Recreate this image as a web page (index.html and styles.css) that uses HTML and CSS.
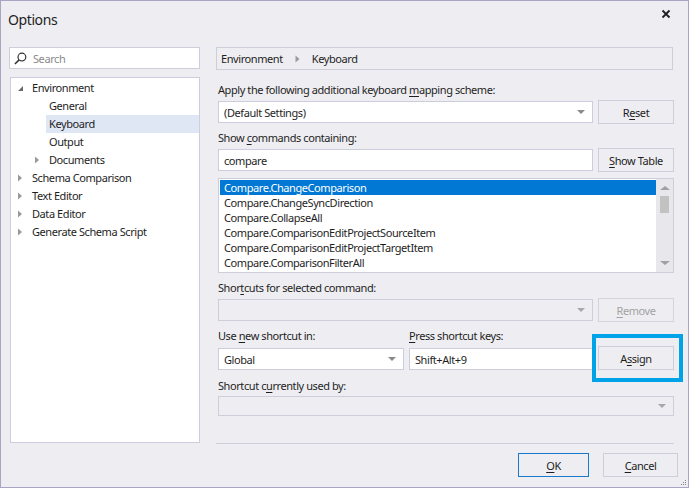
FILE: index.html
```html
<!DOCTYPE html>
<html>
<head>
<meta charset="utf-8">
<link rel="stylesheet" href="styles.css">
</head>
<body>
<div class="dialog">
  <div class="titlebar">
    <span class="title">Options</span>
    <svg class="close" width="10" height="10" viewBox="0 0 10 10"><path d="M1.5 1.5L8.5 8.5M8.5 1.5L1.5 8.5" stroke="#1e1e1e" stroke-width="1.8"/></svg>
  </div>
  <div class="content">
    <div class="leftcol">
      <div class="search">
        <svg width="13" height="13" viewBox="0 0 14 14"><circle cx="8.5" cy="5.5" r="4.2" fill="none" stroke="#333" stroke-width="1.3"/><path d="M5.5 8.5L1 13" stroke="#333" stroke-width="1.6"/></svg>
        <span class="placeholder">Search</span>
      </div>
      <div class="tree">
        <div class="node"><span class="exp"><svg width="7" height="7" viewBox="0 0 7 7"><path d="M6 1V6H1Z" fill="#6a6a6a"/></svg></span>Environment</div>
        <div class="node l1"><span class="exp"></span>General</div>
        <div class="node l1 sel"><span class="exp"></span>Keyboard</div>
        <div class="node l1"><span class="exp"></span>Output</div>
        <div class="node l1"><span class="exp"><svg width="6" height="8" viewBox="0 0 6 8"><path d="M1 0.5L5 4L1 7.5Z" fill="#9a9a9a"/></svg></span>Documents</div>
        <div class="node"><span class="exp"><svg width="6" height="8" viewBox="0 0 6 8"><path d="M1 0.5L5 4L1 7.5Z" fill="#9a9a9a"/></svg></span>Schema Comparison</div>
        <div class="node"><span class="exp"><svg width="6" height="8" viewBox="0 0 6 8"><path d="M1 0.5L5 4L1 7.5Z" fill="#9a9a9a"/></svg></span>Text Editor</div>
        <div class="node"><span class="exp"><svg width="6" height="8" viewBox="0 0 6 8"><path d="M1 0.5L5 4L1 7.5Z" fill="#9a9a9a"/></svg></span>Data Editor</div>
        <div class="node"><span class="exp"><svg width="6" height="8" viewBox="0 0 6 8"><path d="M1 0.5L5 4L1 7.5Z" fill="#9a9a9a"/></svg></span>Generate Schema Script</div>
      </div>
    </div>
    <div class="rightcol">
      <div class="crumb">
        <span>Environment</span>
        <svg width="5" height="8" viewBox="0 0 5 8"><path d="M0.5 0.5L4.5 4L0.5 7.5Z" fill="#9a9a9a"/></svg>
        <span>Keyboard</span>
      </div>
      <div class="label first">Apply the following additional keyboard <u>m</u>apping scheme:</div>
      <div class="row">
        <div class="combo wide"><span>(Default Settings)</span><span class="arrow"></span></div>
        <div class="btn"><span>R<u>e</u>set</span></div>
      </div>
      <div class="label">Show <u>c</u>ommands containing:</div>
      <div class="row">
        <div class="textbox wide">compare</div>
        <div class="btn"><span><u>S</u>how Table</span></div>
      </div>
      <div class="list">
        <div class="items">
          <div class="item sel">Compare.ChangeComparison</div>
          <div class="item">Compare.ChangeSyncDirection</div>
          <div class="item">Compare.CollapseAll</div>
          <div class="item">Compare.ComparisonEditProjectSourceItem</div>
          <div class="item">Compare.ComparisonEditProjectTargetItem</div>
          <div class="item">Compare.ComparisonFilterAll</div>
        </div>
        <div class="scrollbar">
          <span class="sarrow up"></span>
          <span class="thumb"></span>
          <span class="track"></span>
          <span class="sarrow down"></span>
        </div>
      </div>
      <div class="label after-list">Shor<u>t</u>cuts for selected command:</div>
      <div class="row">
        <div class="combo wide disabled"><span></span><span class="arrow"></span></div>
        <div class="btn disabled"><span><u>R</u>emove</span></div>
      </div>
      <div class="row labels">
        <div class="label inl scope">Use <u>n</u>ew shortcut in:</div>
        <div class="label inl"><u>P</u>ress shortcut keys:</div>
      </div>
      <div class="row">
        <div class="combo scope"><span>Global</span><span class="arrow"></span></div>
        <div class="textbox keys">Shift+Alt+9</div>
        <div class="hl"><div class="btn"><span>A<u>s</u>sign</span></div></div>
      </div>
      <div class="label">Shortcut c<u>u</u>rrently used by:</div>
      <div class="combo full disabled"><span></span><span class="arrow"></span></div>
      <div class="spacer"></div>
      <div class="sep"></div>
      <div class="footer">
        <div class="btn ok"><span><u>O</u>K</span></div>
        <div class="btn"><span><u>C</u>ancel</span></div>
      </div>
    </div>
  </div>
  <svg class="grip" width="6" height="6" viewBox="0 0 6 6"><rect x="4" y="0" width="1" height="1" fill="#888"/><rect x="2" y="2" width="1" height="1" fill="#888"/><rect x="4" y="2" width="1" height="1" fill="#888"/><rect x="0" y="4" width="1" height="1" fill="#888"/><rect x="2" y="4" width="1" height="1" fill="#888"/><rect x="4" y="4" width="1" height="1" fill="#888"/></svg>
</div>
</body>
</html>
```
FILE: styles.css
```css
* { box-sizing: border-box; }
html, body { margin: 0; padding: 0; }
body {
  font-family: "Noto Sans", "Open Sans", sans-serif;
  font-size: 11px;
  letter-spacing: -0.42px;
  color: #1e1e1e;
  background: #eeeef2;
}
u { text-decoration: underline; text-underline-offset: 2px; }
.dialog {
  position: relative;
  width: 689px;
  height: 488px;
  border: 1px solid #a7a7c4;
  background: #eeeef2;
  display: flex;
  flex-direction: column;
}
.titlebar {
  height: 46px;
  display: flex;
  justify-content: space-between;
  align-items: flex-start;
  padding: 9px 17px 0 7px;
}
.title { font-size: 14px; line-height: 20px; letter-spacing: -0.4px; }
.close { margin-top: -1px; }
.content {
  flex: 1;
  display: flex;
  gap: 16px;
  padding: 0 14px 10px 8px;
}
.leftcol { width: 192px; display: flex; flex-direction: column; gap: 8px; }
.search {
  height: 22px;
  background: #fff;
  border: 1px solid #cccedb;
  display: flex;
  align-items: center;
  gap: 6px;
  padding-left: 4px;
}
.placeholder { color: #8a8a8a; }
.tree {
  height: 366px;
  background: #fff;
  border: 1px solid #cccedb;
  padding-top: 1px;
  margin-left: 1px;
}
.node {
  height: 18px;
  line-height: 18px;
  display: flex;
  align-items: center;
  padding-left: 3px;
}
.node .exp { width: 18px; display: flex; align-items: center; justify-content: flex-start; padding-left: 3px; }
.node.l1 { padding-left: 20px; }
.node.sel { background: #dfe7f5; margin-left: 35px; padding-left: 3px; }
.node.sel .exp { width: 0; padding: 0; }
.rightcol { flex: 1; display: flex; flex-direction: column; }
.crumb {
  height: 23px;
  border: 1px solid #cccedb;
  display: flex;
  align-items: center;
  padding-left: 4px;
  gap: 12px;
  margin-right: 1px;
}
.label { height: 16px; line-height: 16px; margin: 6px 0 2px 2px; }
.label.first { margin-top: 12px; }
.label.after-list { margin-top: 7px; }
.label.inl { margin: 0; }
.row { display: flex; align-items: center; gap: 5px; margin-left: 2px; }
.row.labels { margin-top: 6px; margin-bottom: 2px; gap: 5px; }
.combo, .textbox {
  height: 22px;
  background: #fff;
  border: 1px solid #cccedb;
  display: flex;
  align-items: center;
  justify-content: space-between;
  padding: 0 5px 0 5px;
}
.combo.disabled { background: #eeeef2; }
.wide { width: 375px; }
.scope { width: 186px; }
.keys { width: 184px; }
.full { width: 456px; height: 20px; margin-left: 2px; }
.arrow {
  width: 0; height: 0;
  border-left: 4px solid transparent;
  border-right: 4px solid transparent;
  border-top: 4px solid #8a8a8a;
  margin-right: 2px;
}
.disabled .arrow { border-top-color: #a8a8a8; }
.btn {
  width: 76px;
  height: 24px;
  border: 1px solid #cccedb;
  background: #eeeef2;
  display: flex;
  align-items: center;
  justify-content: center;
}
.btn.disabled { color: #a2a2a2; border-color: #d4d4de; }
.btn.ok { border-color: #1979ca; width: 71px; }
.hl {
  border: 4px solid #00a2e8;
  padding: 8px 5px 8px 2px;
  margin: -12px -10px -10px -6px;
}
.list {
  height: 95px;
  margin-top: 6px;
  margin-left: 2px;
  border: 1px solid #cccedb;
  background: #fff;
  display: flex;
}
.items { flex: 1; padding: 1px 0 0 1px; }
.item { height: 15px; line-height: 15px; padding-left: 4px; }
.item.sel { background: #0078d4; color: #fff; }
.scrollbar {
  width: 17px;
  background: #e8e8ec;
  display: flex;
  flex-direction: column;
  align-items: center;
}
.sarrow {
  width: 0; height: 0;
  border-left: 5px solid transparent;
  border-right: 5px solid transparent;
}
.sarrow.up { border-bottom: 4px solid #a0a0a0; margin-top: 7px; }
.sarrow.down { border-top: 4px solid #a0a0a0; margin-bottom: 7px; }
.thumb { width: 9px; height: 17px; background: #c2c2c2; margin-top: 6px; }
.track { flex: 1; }
.spacer { flex: 1; }
.sep { height: 1px; background: #cccedb; }
.footer { display: flex; justify-content: flex-end; gap: 14px; padding-top: 9px; margin-right: -4px; }
.footer .btn { height: 24px; }
.footer .btn:last-child { width: 75px; }
.grip { position: absolute; right: 1px; bottom: 1px; }
```
